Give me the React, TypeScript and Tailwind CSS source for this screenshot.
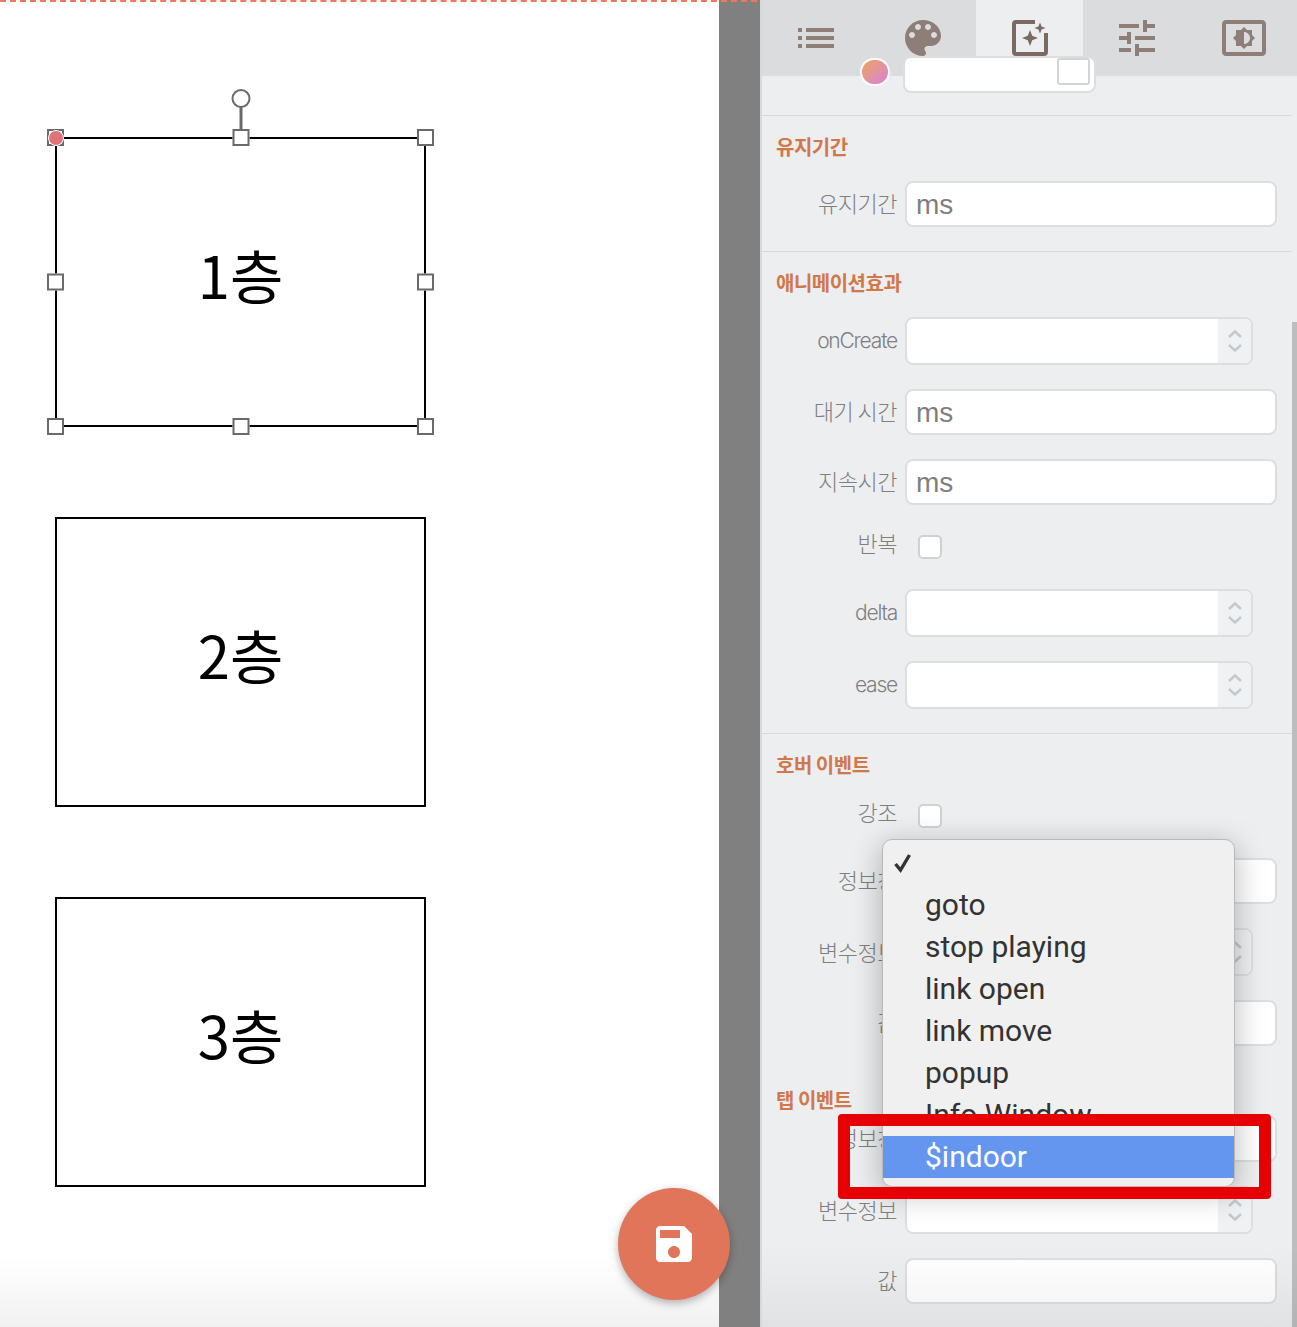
import React from 'react';

const KR = '[font-family:"Noto_Sans_CJK_KR","Noto_Sans",sans-serif]';

const Handle = ({ className }: { className: string }) => (
  <div className={`absolute h-[17px] w-[17px] border-2 border-[#6a6a6a] bg-white ${className}`} />
);

const ShapeBox = ({ label, selected }: { label: string; selected?: boolean }) => (
  <div className="relative flex h-[290px] w-[371px] items-center justify-center border-2 border-black bg-white">
    <span className={`-mt-[16px] text-[58px] leading-none text-black ${KR}`}>{label}</span>
    {selected && (
      <>
        <div className="absolute left-1/2 top-[-32px] h-[24px] w-[3px] -translate-x-1/2 bg-[#6a6a6a]" />
        <div className="absolute left-1/2 top-[-50px] h-[19px] w-[19px] -translate-x-1/2 rounded-full border-2 border-[#6a6a6a] bg-white" />
        <Handle className="left-[-10px] top-[-10px]" />
        <Handle className="left-1/2 top-[-10px] -translate-x-1/2" />
        <Handle className="right-[-10px] top-[-10px]" />
        <Handle className="left-[-10px] top-1/2 -translate-y-1/2" />
        <Handle className="right-[-10px] top-1/2 -translate-y-1/2" />
        <Handle className="bottom-[-10px] left-[-10px]" />
        <Handle className="bottom-[-10px] left-1/2 -translate-x-1/2" />
        <Handle className="bottom-[-10px] right-[-10px]" />
        <div className="absolute left-[-9px] top-[-9px] h-[16px] w-[16px] rounded-full border border-white bg-[#e0737a]" />
      </>
    )}
  </div>
);

const TabIcon = ({ d, active }: { d: string; active?: boolean }) => (
  <div className={`flex h-full flex-1 items-center justify-center ${active ? 'bg-[#edeef0]' : ''}`}>
    <svg width="48" height="48" viewBox="0 0 24 24" fill="#8d7f78" fillRule="evenodd">
      <path d={d} />
    </svg>
  </div>
);

const Tabs = () => (
  <div className="flex h-[76px] shrink-0 bg-[#dbdcde]">
    <TabIcon d="M3 13h2v-2H3v2zm0 4h2v-2H3v2zm0-8h2V7H3v2zm4 4h14v-2H7v2zm0 4h14v-2H7v2zM7 7v2h14V7H7z" />
    <TabIcon d="M12 3c-4.97 0-9 4.03-9 9s4.03 9 9 9c.83 0 1.5-.67 1.5-1.5 0-.39-.15-.74-.39-1.01-.23-.26-.38-.61-.38-.99 0-.83.67-1.5 1.5-1.5H16c2.76 0 5-2.24 5-5 0-4.42-4.03-8-9-8zm-5.5 9c-.83 0-1.5-.67-1.5-1.5S5.67 9 6.5 9 8 9.67 8 10.5 7.33 12 6.5 12zm3-4C8.67 8 8 7.33 8 6.5S8.67 5 9.5 5s1.5.67 1.5 1.5S10.33 8 9.5 8zm5 0c-.83 0-1.5-.67-1.5-1.5S13.67 5 14.5 5s1.5.67 1.5 1.5S15.33 8 14.5 8zm3 4c-.83 0-1.5-.67-1.5-1.5S16.67 9 17.5 9s1.5.67 1.5 1.5-.67 1.5-1.5 1.5z" />
    <div className="flex h-full flex-1 items-center justify-center bg-[#edeef0]">
      <svg width="48" height="48" viewBox="0 0 24 24" fill="none">
        <path d="M14.5 4H5a1 1 0 0 0-1 1v14a1 1 0 0 0 1 1h14a1 1 0 0 0 1-1v-9.5" stroke="#7b6a63" strokeWidth="2" />
        <path d="M12 8l1.1 2.9L16 12l-2.9 1.1L12 16l-1.1-2.9L8 12l2.9-1.1z" fill="#7b6a63" />
        <path d="M17 4.2l.8 2 2 .8-2 .8-.8 2-.8-2-2-.8 2-.8z" fill="#7b6a63" />
      </svg>
    </div>
    <TabIcon d="M3 17v2h6v-2H3zM3 5v2h10V5H3zm10 16v-2h8v-2h-8v-2h-2v6h2zM7 9v2H3v2h4v2h2V9H7zm14 4v-2H11v2h10zm-6-4h2V7h4V5h-4V3h-2v6z" />
    <TabIcon d="M21 3H3c-1.11 0-2 .89-2 2v14c0 1.11.89 2 2 2h18c1.11 0 2-.89 2-2V5c0-1.11-.89-2-2-2zm0 16.01H3V4.99h18v14.02zM8 16h2.5l1.5 1.5 1.5-1.5H16v-2.5l1.5-1.5-1.5-1.5V8h-2.5L12 6.5 10.5 8H8v2.5L6.5 12 8 13.5V16zm4-7c1.66 0 3 1.34 3 3s-1.34 3-3 3V9z" />
  </div>
);

const Divider = () => <div className="h-px w-[530px] shrink-0 bg-[#d3d9de]" />;

const Heading = ({ children, className = '' }: { children: React.ReactNode; className?: string }) => (
  <div className={`ml-[14px] h-[28px] shrink-0 text-[20px] font-bold leading-[28px] tracking-[-0.5px] text-[#d0784a] ${KR} ${className}`}>
    {children}
  </div>
);

const Label = ({ children, latin }: { children: React.ReactNode; latin?: boolean }) => (
  <div
    className={`w-[135px] shrink-0 text-right leading-none text-[#7f7f7f] ${
      latin ? 'font-["Inter",sans-serif] text-[21px] font-light tracking-[-1.2px]' : `text-[22px] font-light tracking-[-0.5px] ${KR}`
    }`}
  >
    {children}
  </div>
);

const InputRow = ({ label, unit, className = '' }: { label: string; unit?: string; className?: string }) => (
  <div className={`flex h-[46px] shrink-0 ${className}`}>
    <div className="-mt-[5px] flex items-center self-center pr-0">
      <Label>{label}</Label>
    </div>
    <div className="ml-[8px] flex w-[372px] items-end rounded-[8px] border-2 border-[#dcdee0] bg-white pl-[9px] font-['Liberation_Sans',sans-serif] text-[28px] leading-[40px] text-[#7f7f7f]">
      {unit}
    </div>
  </div>
);

const SelectRow = ({ label, latin, className = '' }: { label: string; latin?: boolean; className?: string }) => (
  <div className={`flex h-[48px] shrink-0 items-center ${className}`}>
    <div className="-mt-[2px]">
      <Label latin={latin}>{label}</Label>
    </div>
    <div className="ml-[8px] flex h-full w-[348px] justify-end overflow-hidden rounded-[8px] border-2 border-[#dcdee0] bg-white">
      <div className="flex w-[33px] flex-col items-center justify-center gap-[4px] bg-[#f0f1f3]">
        <svg width="16" height="10" viewBox="0 0 16 10" fill="none">
          <path d="M2 8l6-5.5L14 8" stroke="#c3c9cd" strokeWidth="2.5" />
        </svg>
        <svg width="16" height="10" viewBox="0 0 16 10" fill="none">
          <path d="M2 2l6 5.5L14 2" stroke="#c3c9cd" strokeWidth="2.5" />
        </svg>
      </div>
    </div>
  </div>
);

const CheckRow = ({ label, className = '' }: { label: string; className?: string }) => (
  <div className={`flex h-[36px] shrink-0 items-center ${className}`}>
    <div className="-mt-[10px]">
      <Label>{label}</Label>
    </div>
    <div className="ml-[21px] h-[24px] w-[24px] rounded-[5px] border-2 border-[#cfd1d3] bg-white" />
  </div>
);

const menuItems = ['goto', 'stop playing', 'link open', 'link move', 'popup', 'Info Window'];

const Dropdown = () => (
  <div className="absolute left-[120px] top-[839px] z-10 w-[353px] rounded-[10px] border border-[#b9b9b9] bg-[#f0f0f0] pb-[8px] pt-[2px] font-['Roboto',sans-serif] text-[30px] leading-[42px] text-[#333] shadow-[0_6px_30px_rgba(0,0,0,0.28)]">
    <div className="flex h-[42px] items-center pl-[10px]">
      <svg width="20" height="20" viewBox="0 0 20 20" fill="none">
        <path d="M2.5 11l5 6L16.5 2" stroke="#333" strokeWidth="3.4" />
      </svg>
    </div>
    {menuItems.map((item) => (
      <div key={item} className="h-[42px] pl-[42px]">
        {item}
      </div>
    ))}
    <div className="h-[42px] bg-[#6496f0] pl-[42px] text-white">$indoor</div>
  </div>
);

export default function App() {
  return (
    <div className="relative flex h-[1327px] w-[1297px] overflow-hidden bg-white">
      {/* canvas */}
      <div className="relative flex w-[719px] shrink-0 flex-col gap-[90px] bg-white pl-[55px] pt-[137px]">
        <ShapeBox label="1층" selected />
        <ShapeBox label="2층" />
        <ShapeBox label="3층" />
        <div className="absolute bottom-0 left-0 h-[70px] w-full bg-gradient-to-b from-white to-[#f1f1f1]" />
      </div>

      {/* gray gutter */}
      <div className="w-[41px] shrink-0 bg-[#808080]" />

      {/* properties panel */}
      <div className="relative flex w-[537px] shrink-0 flex-col border-l-2 border-[#d5dade] bg-[#edeef0]">
        <Tabs />

        <div className="relative h-[17px] shrink-0">
          <div className="absolute left-[98px] top-[-18px] h-[28px] w-[30px] rounded-full border-2 border-white bg-gradient-to-br from-[#f0a14a] to-[#d87fd8]" />
          <div className="absolute left-[141px] top-[-20px] flex h-[37px] w-[193px] justify-end rounded-[8px] border-2 border-[#dcdee0] bg-white pr-[4px]">
            <div className="h-[27px] w-[33px] rounded-[3px] border-2 border-[#d4d4d4] bg-white" />
          </div>
        </div>

        <div className="mt-[22px]">
          <Divider />
        </div>
        <Heading className="mt-[17px]">유지기간</Heading>
        <InputRow label="유지기간" unit="ms" className="mt-[20px]" />
        <div className="mt-[24px]">
          <Divider />
        </div>

        <Heading className="mt-[17px]">애니메이션효과</Heading>
        <SelectRow label="onCreate" latin className="mt-[20px]" />
        <InputRow label="대기 시간" unit="ms" className="mt-[24px]" />
        <InputRow label="지속시간" unit="ms" className="mt-[24px]" />
        <CheckRow label="반복" className="mt-[24px]" />
        <SelectRow label="delta" latin className="mt-[24px]" />
        <SelectRow label="ease" latin className="mt-[24px]" />
        <div className="mt-[24px]">
          <Divider />
        </div>

        <Heading className="mt-[17px]">호버 이벤트</Heading>
        <CheckRow label="강조" className="mt-[19px]" />
        <InputRow label="정보창" className="mt-[24px]" />
        <SelectRow label="변수정보" className="mt-[24px]" />
        <InputRow label="값" className="mt-[24px]" />

        <Heading className="mt-[40px]">탭 이벤트</Heading>
        <InputRow label="정보창" className="mt-[2px]" />
        <SelectRow label="변수정보" className="mt-[24px]" />
        <InputRow label="값" className="mt-[24px]" />

        {/* scrollbar */}
        <div className="absolute bottom-0 right-0 top-[322px] w-[5px] bg-[#bdbdbd]" />
        <div className="pointer-events-none absolute bottom-0 left-0 h-[80px] w-full bg-gradient-to-b from-transparent to-black/5" />

        <Dropdown />

        {/* callout */}
        <div className="absolute left-[76px] top-[1114px] z-20 h-[85px] w-[433px] rounded-[4px] border-[12px] border-[#e60000]" />
      </div>

      {/* save button */}
      <div className="absolute left-[618px] top-[1188px] z-10 flex h-[112px] w-[112px] items-center justify-center rounded-full bg-[#e0755a] shadow-[0_3px_8px_rgba(0,0,0,0.3)]">
        <svg width="48" height="48" viewBox="0 0 24 24" fill="#fff" fillRule="evenodd">
          <path d="M17 3H5c-1.11 0-2 .9-2 2v14c0 1.1.89 2 2 2h14c1.1 0 2-.9 2-2V7l-4-4zm-5 16c-1.66 0-3-1.34-3-3s1.34-3 3-3 3 1.34 3 3-1.34 3-3 3zm3-10H5V5h10v4z" />
        </svg>
      </div>

      {/* dashed guide */}
      <div className="absolute left-0 top-0 w-[757px] border-t-2 border-dashed border-[#f0785a]" />
    </div>
  );
}
